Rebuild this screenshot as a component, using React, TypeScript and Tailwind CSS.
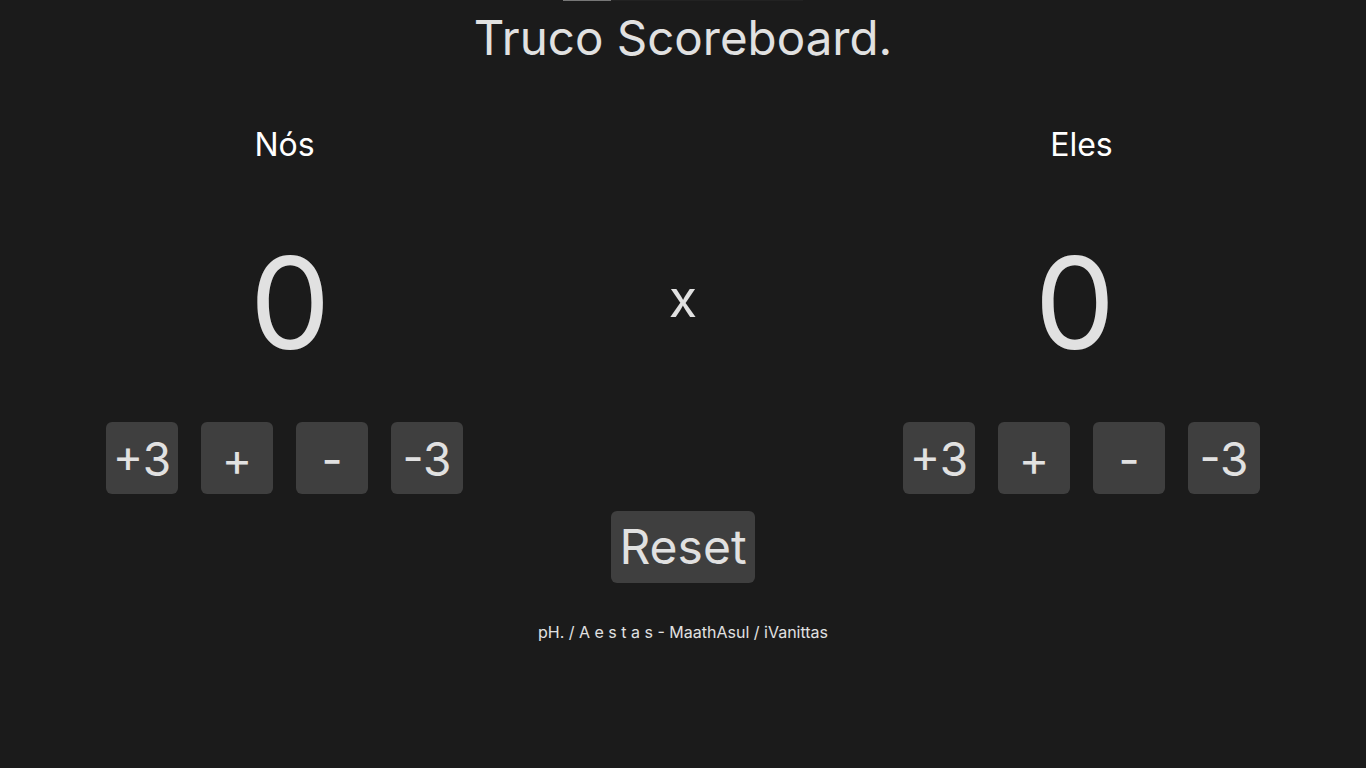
import React, { useState } from "react";

const font = { fontFamily: "Inter, 'Noto Sans', sans-serif" };

const ScoreButton = ({ label, onClick }: { label: string; onClick: () => void }) => (
  <button
    onClick={onClick}
    className="w-[72px] h-[72px] rounded-md bg-[#3f3f3f] text-[#e1e1e1] text-[46px] leading-none flex items-center justify-center pt-[2px]"
  >
    {label}
  </button>
);

const Team = ({
  name,
  score,
  setScore,
  scoreClass,
}: {
  name: string;
  score: number;
  setScore: (n: number) => void;
  scoreClass: string;
}) => {
  const change = (n: number) => {
    const next = Math.min(12, Math.max(0, score + n));
    setScore(next);
  };

  return (
    <div className="w-[357px] flex flex-col items-center">
      <h2 className="text-[32px] leading-none text-white mt-[129px]">{name}</h2>
      <div className={"text-[128px] leading-none text-[#e1e1e1] mt-[78px] " + scoreClass}>{score}</div>
      <div className="flex gap-[23px] mt-[55px]">
        <ScoreButton label="+3" onClick={() => change(3)} />
        <ScoreButton label="+" onClick={() => change(1)} />
        <ScoreButton label="-" onClick={() => change(-1)} />
        <ScoreButton label="-3" onClick={() => change(-3)} />
      </div>
    </div>
  );
};

const App = () => {
  const [nos, setNos] = useState(0);
  const [eles, setEles] = useState(0);

  return (
    <div className="min-h-screen w-full bg-[#1b1b1b] flex flex-col items-center" style={font}>
      {/* barra do topo */}
      <div className="w-[240px] h-px bg-[#222222] flex">
        <div className="w-[48px] h-px bg-[#777777]" />
      </div>
      <h1 className="text-[47.5px] h-[48px] leading-none text-[#e1e1e1] mt-[13px]">Truco Scoreboard.</h1>

      <div className="w-full px-[106px] flex justify-between -mt-[62px]">
        <Team name="Nós" score={nos} setScore={setNos} scoreClass="pl-[11px]" />
        <div className="text-[52px] leading-none text-[#e1e1e1] mt-[273px]">x</div>
        <Team name="Eles" score={eles} setScore={setEles} scoreClass="pr-[13px]" />
      </div>

      <button
        onClick={() => {
          setNos(0);
          setEles(0);
        }}
        className="mt-[17px] w-[144px] h-[72px] rounded-md bg-[#3f3f3f] text-[#e1e1e1] text-[48px] leading-none flex items-center justify-center"
      >
        Reset
      </button>

      <p className="text-[16px] leading-none text-[#e1e1e1] mt-[41px]">
        pH. / A e s t a s - MaathAsul / iVanittas
      </p>
    </div>
  );
};

export default App;
